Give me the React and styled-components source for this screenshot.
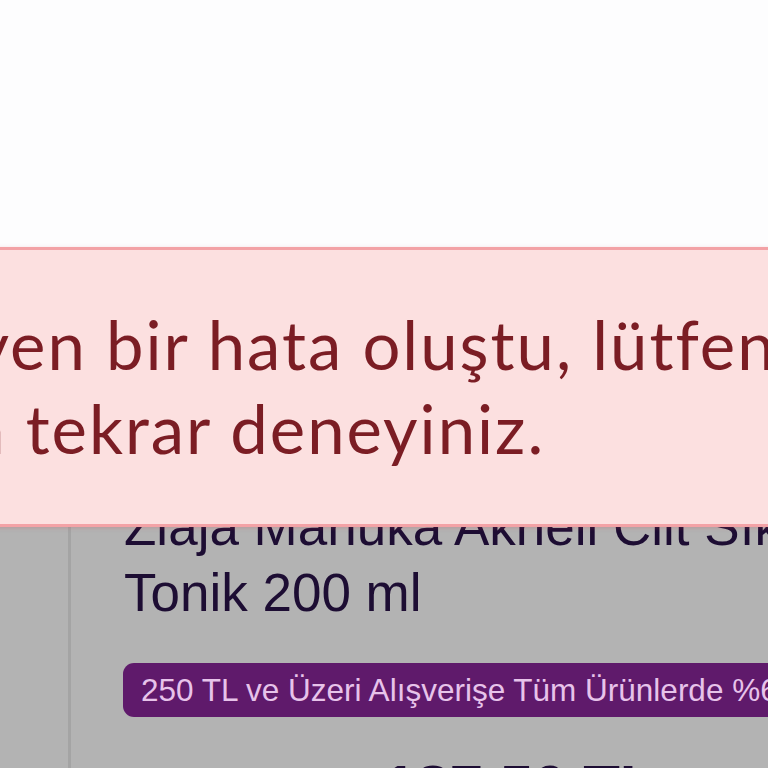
import React from 'react'
import styled, { createGlobalStyle } from 'styled-components'

const GlobalStyle = createGlobalStyle`
  html, body {
    margin: 0;
    padding: 0;
    background: #fdfdfe;
    overflow: hidden;
  }
  * {
    box-sizing: border-box;
  }
`

const StyledPage = styled.div`
  position: relative;
  width: 768px;
  height: 768px;
  overflow: hidden;
  display: flex;
  flex-direction: column;
`

const StyledHeader = styled.div`
  height: 247px;
  flex-shrink: 0;
  background-color: #fdfdfe;
`

const StyledProductArea = styled.div`
  flex: 1;
  display: flex;
  background-color: #b3b3b3;
`

const StyledSideColumn = styled.div`
  width: 71px;
  flex-shrink: 0;
  border-right: 3px solid #a4a4a4;
`

const StyledDetails = styled.div`
  padding: 247px 0 0 52px;
  display: flex;
  flex-direction: column;
  min-width: 0;
`

const StyledTitle = styled.h1`
  margin: 0 0 0 1px;
  width: 900px;
  font-family: "Liberation Sans", Arial, sans-serif;
  font-weight: normal;
  font-size: 53px;
  line-height: 66px;
  color: #1d0d33;
`

const StyledBadge = styled.div`
  margin-top: 37px;
  height: 54px;
  width: 720px;
  padding: 0 18px;
  border-radius: 11px;
  background-color: #5f1a6b;
  color: #e7c3ea;
  font-family: "Liberation Sans", Arial, sans-serif;
  font-size: 31.5px;
  line-height: 54px;
  white-space: nowrap;
  overflow: hidden;
`

const StyledPrice = styled.div`
  margin: 35px 0 0 260px;
  font-family: "Liberation Sans", Arial, sans-serif;
  font-weight: bold;
  font-size: 60px;
  line-height: 70px;
  color: #1d0d33;
  white-space: nowrap;
`

const StyledToast = styled.div`
  position: absolute;
  top: 247px;
  left: -40px;
  right: -40px;
  height: 280px;
  padding-top: 52px;
  background-color: #fce0e0;
  border: 3px solid #f3a2a6;
  box-shadow: 0 1px 4px rgba(200, 80, 90, 0.25);
  font-family: Lato, "Noto Sans", sans-serif;
  font-size: 67px;
  line-height: 84px;
  letter-spacing: 2px;
  color: #7b1d24;
`

const StyledToastLine = styled.div`
  white-space: nowrap;
  margin-left: ${props => props.shift}px;
`

export default function App () {
  return (
    <>
      <GlobalStyle />
      <StyledPage>
        <StyledHeader />
        <StyledProductArea>
          <StyledSideColumn />
          <StyledDetails>
            <StyledTitle>Ziaja Manuka Akneli Cilt Sıkılaştırıcı Tonik 200 ml</StyledTitle>
            <StyledBadge>250 TL ve Üzeri Alışverişe Tüm Ürünlerde %6 İndirim</StyledBadge>
            <StyledPrice>187,50 TL</StyledPrice>
          </StyledDetails>
        </StyledProductArea>
        <StyledToast role="alert">
          <StyledToastLine shift={-295}>Beklenmeyen bir hata oluştu, lütfen daha</StyledToastLine>
          <StyledToastLine shift={-128}>sonra tekrar deneyiniz.</StyledToastLine>
        </StyledToast>
      </StyledPage>
    </>
  )
}
